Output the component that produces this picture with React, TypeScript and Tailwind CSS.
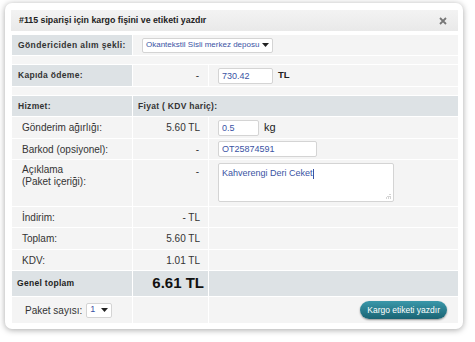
import React from "react";

const font = { fontFamily: '"Liberation Sans", Arial, sans-serif' };

function Caret() {
  return (
    <svg width="7" height="4" viewBox="0 0 7 4" className="ml-auto shrink-0">
      <path d="M0 0h7L3.5 4z" fill="#222" />
    </svg>
  );
}

export default function App() {
  return (
    <div className="w-[475px] h-[342px] bg-white pt-[3px] pl-[5px] text-[#333]" style={font}>
      <div className="w-[458px] h-[326px] rounded-[7px] bg-white shadow-[0_1px_6px_rgba(0,0,0,0.35)] pt-[7px] pl-[6px] pr-[5px]">
        {/* Title bar */}
        <div className="h-[21px] flex items-center px-2 bg-gradient-to-b from-[#f3f3f3] to-[#e9e9e9]">
          <span className="text-[8.8px] font-bold text-[#222]">#115 siparişi için kargo fişini ve etiketi yazdır</span>
          <svg width="8" height="8" viewBox="0 0 8 8" className="ml-auto mr-[3px]">
            <path d="M1 1l6 6M7 1L1 7" stroke="#777" strokeWidth="1.8" />
          </svg>
        </div>

        <table className="mt-[3px] w-[447px] border-collapse table-fixed text-[10px] whitespace-nowrap">
          <colgroup>
            <col className="w-[121px]" />
            <col className="w-[76px]" />
            <col className="w-[250px]" />
          </colgroup>
          <tbody>
            <tr className="h-[21px]">
              <td className="border border-white bg-[#dde2e5] pl-[6px] font-bold text-[8.5px] tracking-[0.4px]">Göndericiden alım şekli:</td>
              <td colSpan={2} className="border border-white bg-[#f4f4f4] pl-[9px]">
                <div className="w-[131px] h-[15px] bg-white border border-[#d4d4d4] rounded-[2px] flex items-center px-[3px] text-[8px] text-[#3a53a4]">
                  <span>Okantekstil Sisli merkez deposu</span>
                  <Caret />
                </div>
              </td>
            </tr>
            <tr className="h-[9px]">
              <td colSpan={3} className="border border-white bg-[#f5f5f5]"></td>
            </tr>
            <tr className="h-[22px]">
              <td className="border border-white bg-[#dde2e5] pl-[6px] font-bold text-[8.5px] tracking-[0.3px]">Kapıda ödeme:</td>
              <td className="border border-white bg-[#f4f4f4] text-right pr-[9px]">-</td>
              <td className="border border-white bg-[#f4f4f4] pl-[9px]">
                <div className="flex items-center gap-[5px]">
                  <input readOnly defaultValue="730.42" className="w-[55px] h-[16px] bg-white border border-[#d4d4d4] rounded-[2px] px-[3px] text-[9px] text-[#3a53a4] outline-none" />
                  <span className="text-[9.5px] font-bold text-[#222]">TL</span>
                </div>
              </td>
            </tr>
            <tr className="h-[9px]">
              <td colSpan={3} className="border border-white bg-[#f5f5f5]"></td>
            </tr>
            <tr className="h-[21px] bg-[#dde2e5] font-bold text-[8.5px] tracking-[0.3px]">
              <td className="border border-white pl-[6px]">Hizmet:</td>
              <td colSpan={2} className="border border-white pl-[5px]">Fiyat ( KDV hariç):</td>
            </tr>
            <tr className="h-[22px] bg-[#f4f4f4]">
              <td className="border border-white pl-[10px]">Gönderim ağırlığı:</td>
              <td className="border border-white text-right pr-[8px]">5.60 TL</td>
              <td className="border border-white pl-[9px]">
                <div className="flex items-center gap-[5px]">
                  <input readOnly defaultValue="0.5" className="w-[41px] h-[16px] bg-white border border-[#d4d4d4] rounded-[2px] px-[3px] text-[9px] text-[#3a53a4] outline-none" />
                  <span className="text-[11px] text-[#222]">kg</span>
                </div>
              </td>
            </tr>
            <tr className="h-[21px] bg-[#f4f4f4]">
              <td className="border border-white pl-[10px]">Barkod (opsiyonel):</td>
              <td className="border border-white text-right pr-[9px]">-</td>
              <td className="border border-white pl-[9px]">
                <input readOnly defaultValue="OT25874591" className="w-[99px] h-[16px] bg-white border border-[#d4d4d4] rounded-[2px] px-[3px] text-[9px] text-[#3a53a4] outline-none" />
              </td>
            </tr>
            <tr className="h-[47px] bg-[#f4f4f4] align-top">
              <td className="border border-white pl-[10px] pt-[4px] leading-[12px]">
                Açıklama
                <br />
                (Paket içeriği):
              </td>
              <td className="border border-white text-right pr-[9px] pt-[4px]">-</td>
              <td className="border border-white pl-[9px] pt-[3px]">
                <div className="relative w-[176px] h-[39px] bg-white border border-[#d4d4d4] rounded-[2px] px-[3px] pt-[3px] text-[9px] text-[#3a53a4]">
                  Kahverengi Deri Ceket<span className="inline-block w-px h-[10px] bg-[#3a53a4] align-middle" />
                  <svg width="5" height="5" viewBox="0 0 5 5" className="absolute right-[2px] bottom-[2px]">
                    <path d="M4 0v1M2 2v1M4 2v1M0 4h1M2 4h1M4 4h1" stroke="#aaa" strokeWidth="1" />
                  </svg>
                </div>
              </td>
            </tr>
            <tr className="h-[21px] bg-[#f4f4f4]">
              <td className="border border-white pl-[10px]">İndirim:</td>
              <td className="border border-white text-right pr-[8px]">- TL</td>
              <td className="border border-white"></td>
            </tr>
            <tr className="h-[22px] bg-[#f4f4f4]">
              <td className="border border-white pl-[10px]">Toplam:</td>
              <td className="border border-white text-right pr-[8px]">5.60 TL</td>
              <td className="border border-white"></td>
            </tr>
            <tr className="h-[21px] bg-[#f4f4f4]">
              <td className="border border-white pl-[10px]">KDV:</td>
              <td className="border border-white text-right pr-[8px]">1.01 TL</td>
              <td className="border border-white"></td>
            </tr>
            <tr className="h-[26px] bg-[#dde2e5]">
              <td className="border border-white pl-[5px] font-bold text-[8.5px] tracking-[0.3px] text-[#222]">Genel toplam</td>
              <td className="border border-white text-right pr-[4px] font-bold text-[15px] text-[#111]">6.61 TL</td>
              <td className="border border-white"></td>
            </tr>
            <tr className="h-[27px] bg-[#f4f4f4]">
              <td className="border border-white pl-[13px]">
                <div className="flex items-center gap-[4px] text-[10px]">
                  Paket sayısı:
                  <div className="w-[26px] h-[15px] bg-white border border-[#d4d4d4] rounded-[2px] flex items-center px-[3px] text-[9px] text-[#3a53a4]">
                    1
                    <Caret />
                  </div>
                </div>
              </td>
              <td className="border border-white"></td>
              <td className="border border-white pr-[11px]">
                <div className="flex justify-end">
                  <button className="h-[18px] px-[7px] rounded-full bg-gradient-to-b from-[#3a98aa] to-[#1a6474] shadow-[0_1px_2px_rgba(0,0,0,0.4)] text-white text-[8.5px]">
                    Kargo etiketi yazdır
                  </button>
                </div>
              </td>
            </tr>
          </tbody>
        </table>
      </div>
    </div>
  );
}
